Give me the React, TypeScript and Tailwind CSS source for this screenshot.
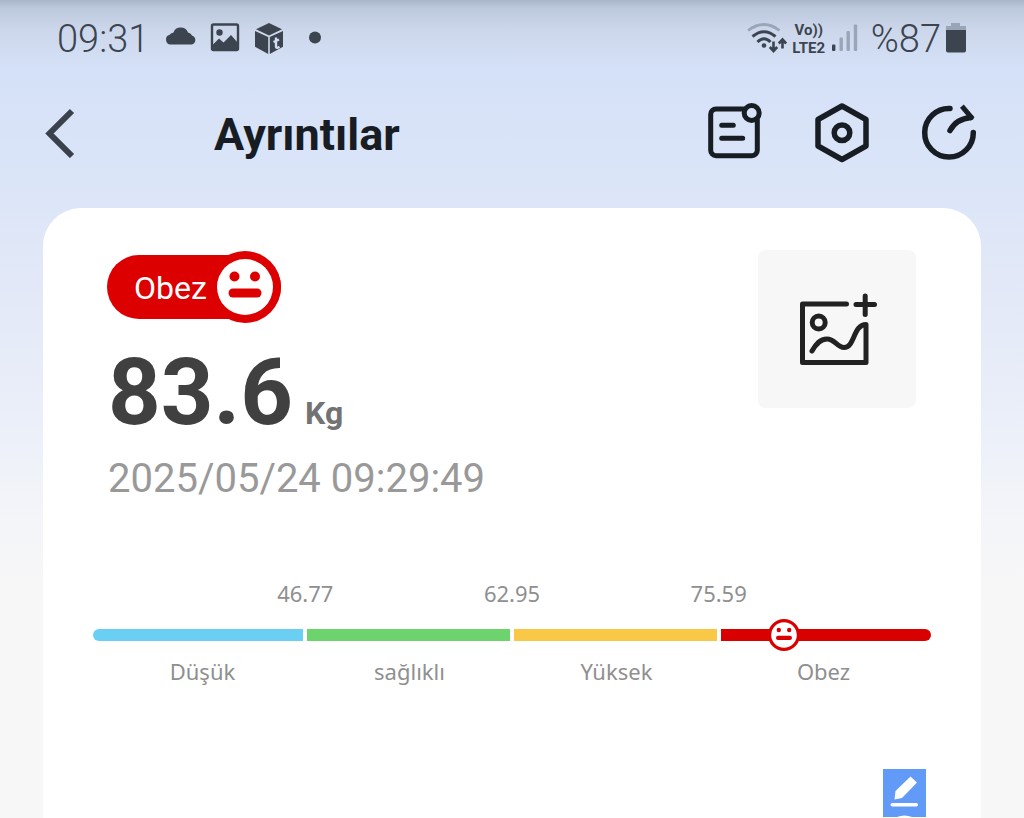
import React from 'react';

const segments = [
  { label: 'Düşük', color: 'bg-[#6acff3] rounded-l-full' },
  { label: 'sağlıklı', color: 'bg-[#6dd36d]' },
  { label: 'Yüksek', color: 'bg-[#f9c846]' },
  { label: 'Obez', color: 'bg-[#d90000] rounded-r-full' },
];

const thresholds = ['46.77', '62.95', '75.59'];

// Marker position along the whole scale, in percent
const markerPosition = 82.4;

const StatusBar: React.FC = () => (
  <div className="flex h-[78px] items-center justify-between px-[57px] text-[#3c444f]">
    <div className="flex items-center">
      <span className="text-[38px] font-light leading-10">09:31</span>
      <svg className="ml-4 h-8 w-8" viewBox="0 0 32 32" fill="currentColor">
        <path d="M5.500 21.500a5 5 0 0 1-.8-9.800 5 5 0 0 1 3.600-2A7.800 7.800 0 0 1 23 9.500a5.500 5.500 0 0 1 4 3A4.700 4.700 0 0 1 27 21.500z" />
      </svg>
      <svg className="ml-3 h-8 w-8" viewBox="0 0 32 32">
        <rect x="3" y="1.500" width="26" height="25.500" rx="1.500" fill="none" stroke="currentColor" strokeWidth="2.400" />
        <circle cx="10.500" cy="9.500" r="3.200" fill="currentColor" />
        <path d="M3.500 22l6.500-6.500 4.500 4L22 12l7 8v7H3.500z" fill="currentColor" />
      </svg>
      <svg className="ml-3 h-8 w-8" viewBox="0 0 32 32">
        <path d="M16 0l13 6.200-13 6.300L3 6.200z" fill="currentColor" />
        <path d="M2 8l13.200 6v17L2 23.800zM30 8l-13.200 6v17L30 23.800z" fill="currentColor" />
        <path d="M23 14.500v9q0 2.500 3.500.3M20.500 19l5.500-2.500" fill="none" stroke="#d3def2" strokeWidth="2.400" />
      </svg>
      <svg className="ml-6 h-8 w-3" viewBox="0 0 12 32" fill="currentColor">
        <circle cx="6" cy="14.500" r="6" />
      </svg>
    </div>
    <div className="flex items-center">
      <svg className="h-8 w-10" viewBox="0 0 40 32" fill="none" stroke="currentColor">
        <path d="M1 7.500Q17-4.500 32.500 7.500" stroke="#9aa5b8" strokeWidth="2.800" />
        <path d="M5.500 13.500q11.500-9.500 23 0" strokeWidth="3" />
        <path d="M10.500 19q6.500-6.500 13 0" strokeWidth="3" />
        <circle cx="17" cy="22.500" r="2.300" fill="currentColor" stroke="none" />
        <path d="M26.500 18.500v9M22.800 24l3.700 4 3.700-4M35.500 25.500V16.500M31.800 20.500l3.700-4 3.700 4" strokeWidth="2.600" />
      </svg>
      <div className="ml-1 flex w-9 flex-col items-center text-[15px] font-bold leading-[18px]">
        <span>Vo))</span>
        <span>LTE2</span>
      </div>
      <svg className="ml-1 h-8 w-7" viewBox="0 0 28 32">
        <rect x="1" y="21.500" width="3.400" height="6.500" rx="1" fill="currentColor" />
        <rect x="8.500" y="14.500" width="3.400" height="13.500" rx="1" fill="#9aa5b8" />
        <rect x="15.500" y="8" width="3.400" height="20" rx="1" fill="#9aa5b8" />
        <rect x="22.800" y="1.500" width="3.400" height="26.500" rx="1" fill="#9aa5b8" />
      </svg>
      <span className="ml-3 text-[38px] font-light leading-10">%87</span>
      <svg className="ml-1 h-8 w-[22px]" viewBox="0 0 22 32">
        <path d="M6 0h9v3h6v5H1V3h5z" fill="#9aa5b8" />
        <path d="M1 7h20v20.500a2 2 0 0 1-2 2H3a2 2 0 0 1-2-2z" fill="currentColor" />
      </svg>
    </div>
  </div>
);

const Header: React.FC = () => (
  <header className="flex h-[110px] items-center justify-between pl-11 pr-[45px] text-[#181d24]">
    <div className="flex items-center">
      <button type="button" aria-label="Geri">
        <svg className="h-[50px] w-8" viewBox="0 0 32 50" fill="none" stroke="#3a414b" strokeWidth="6">
          <path d="M28 3L5.500 25.500 28 48" />
        </svg>
      </button>
      <h1 className="ml-[138px] pt-1 text-[45px] font-bold leading-[52px]">Ayrıntılar</h1>
    </div>
    <div className="flex items-center gap-[47px]">
      <button type="button" aria-label="Rapor">
        <svg className="h-[60px] w-[60px]" viewBox="0 0 60 60" fill="none" stroke="currentColor" strokeWidth="5" strokeLinecap="round">
          <path d="M38.500 6H11a5.300 5.300 0 0 0-5.300 5.300v36A5.300 5.300 0 0 0 11 52.700h36a5.300 5.300 0 0 0 5.300-5.400V17" />
          <circle cx="46.700" cy="10" r="7.500" />
          <path d="M16.700 22.300h11.600M16.700 35.300h21" />
        </svg>
      </button>
      <button type="button" aria-label="Ayarlar">
        <svg className="h-[60px] w-[60px]" viewBox="0 0 60 60" fill="none" stroke="currentColor" strokeWidth="5.500" strokeLinejoin="round">
          <path d="M30 3l24 13.500v26.500L30 56.500 6 43V16.500z" />
          <circle cx="30" cy="29.700" r="7.800" />
        </svg>
      </button>
      <button type="button" aria-label="Paylaş">
        <svg className="h-[60px] w-[60px]" viewBox="0 0 60 60" fill="none" stroke="currentColor" strokeWidth="5.500" strokeLinecap="round">
          <path d="M31 5.500A24.300 24.300 0 1 0 54.300 29.500" />
          <path d="M31 27.500C35 20 41 15.500 52 14.500" />
          <path d="M44.500 5l7.500 9" strokeLinecap="square" strokeWidth="5" />
        </svg>
      </button>
    </div>
  </header>
);

const Face: React.FC<{ className: string }> = ({ className }) => (
  <svg className={className} viewBox="0 0 72 72">
    <circle cx="36" cy="36" r="36" fill="#dc0000" />
    <circle cx="36" cy="36" r="28" fill="#fff" />
    <circle cx="25.500" cy="25.500" r="5" fill="#dc0000" />
    <circle cx="46" cy="25.500" r="5" fill="#dc0000" />
    <rect x="19.500" y="37.500" width="33" height="9" rx="4.500" fill="#dc0000" />
  </svg>
);

const WeightScale: React.FC = () => (
  <div className="mt-[76px] font-['Noto_Sans',sans-serif] text-[22px] leading-7 text-[#8f8f8f]">
    <div className="grid grid-cols-3 px-[109px] text-center">
      {thresholds.map((value) => (
        <span key={value}>{value}</span>
      ))}
    </div>
    <div className="relative mt-[22px] grid grid-cols-[210fr_203fr_203fr_210fr] gap-1">
      {segments.map((segment) => (
        <div key={segment.label} className={`h-3 ${segment.color}`} />
      ))}
      <div className="absolute top-1/2 -translate-x-1/2 -translate-y-1/2" style={{ left: `${markerPosition}%` }}>
        <svg className="h-8 w-8" viewBox="0 0 32 32">
          <circle cx="16" cy="16" r="14.400" fill="#fff" stroke="#d90000" strokeWidth="3.200" />
          <circle cx="10.800" cy="11" r="2.200" fill="#d90000" />
          <circle cx="21.200" cy="11" r="2.200" fill="#d90000" />
          <rect x="8" y="16.800" width="16" height="4.200" rx="2.100" fill="#d90000" />
        </svg>
      </div>
    </div>
    <div className="mt-4 grid grid-cols-4 pl-[6px] pr-1 text-center">
      {segments.map((segment) => (
        <span key={segment.label}>{segment.label}</span>
      ))}
    </div>
  </div>
);

const App: React.FC = () => {
  return (
    <div className="flex min-h-screen flex-col bg-[linear-gradient(to_bottom,#a9b5c9_0px,#bcc8dc_8px,#ccd7eb_30px,#d5e1f8_70px,#dbe5f8_180px,#e2e8f7_280px,#e9eef9_400px,#f4f5f9_520px,#f7f7f7_600px)] font-[Roboto,sans-serif]">
      <StatusBar />
      <Header />

      <main className="mx-[43px] mt-5 flex-1 rounded-t-[38px] bg-white px-[50px] pt-[42px]">
        <div className="flex items-start justify-between pl-[14px] pr-[15px]">
          <div>
            <div className="mt-[5px] flex h-16 w-fit items-center rounded-full bg-[#dc0000] pl-[27px] text-[32px] text-white">
              <span className="pt-0.5">Obez</span>
              <Face className="ml-[2px] h-[72px] w-[72px] shrink-0" />
            </div>
            <p className="mt-7 flex items-baseline gap-3 pl-px font-bold">
              <span className="text-[92px] leading-[92px] text-[#404040]">83.6</span>
              <span className="text-[32px] leading-8 text-[#737373]">Kg</span>
            </p>
            <p className="mt-4 pl-px text-[40px] leading-[48px] text-[#999]">2025/05/24 09:29:49</p>
          </div>
          <button
            type="button"
            aria-label="Fotoğraf ekle"
            className="flex h-[158px] w-[158px] items-center justify-center rounded-lg bg-[#f7f7f7]"
          >
            <svg className="h-20 w-20" viewBox="0 0 80 80" fill="none" stroke="#222" strokeWidth="5" strokeLinecap="round" strokeLinejoin="round">
              <path d="M49.500 15H5.500v58.500H69V35.500C56 35.500 58 58.500 47 58.500 40 58.500 38 50 30 50 23 50 19 55 15 62" />
              <circle cx="21.700" cy="33.500" r="6.500" />
              <path d="M59 15.500h18.500M68.200 7v18.500" />
            </svg>
          </button>
        </div>

        <WeightScale />

        <div className="mt-[84px] flex justify-end pr-[5px]">
          <button type="button" aria-label="Düzenle" className="bg-[#629af8]">
            <svg className="h-12 w-[43px]" viewBox="0 0 43 48" fill="#fff">
              <path d="M27.500 7.500l6.500 6-15 15.500-7.500 1.500 1-8.500z" />
              <rect x="7.500" y="34" width="27.500" height="3.500" rx="1.700" />
              <circle cx="21.500" cy="66.500" r="20" />
            </svg>
          </button>
        </div>
      </main>
    </div>
  );
};

export default App;
